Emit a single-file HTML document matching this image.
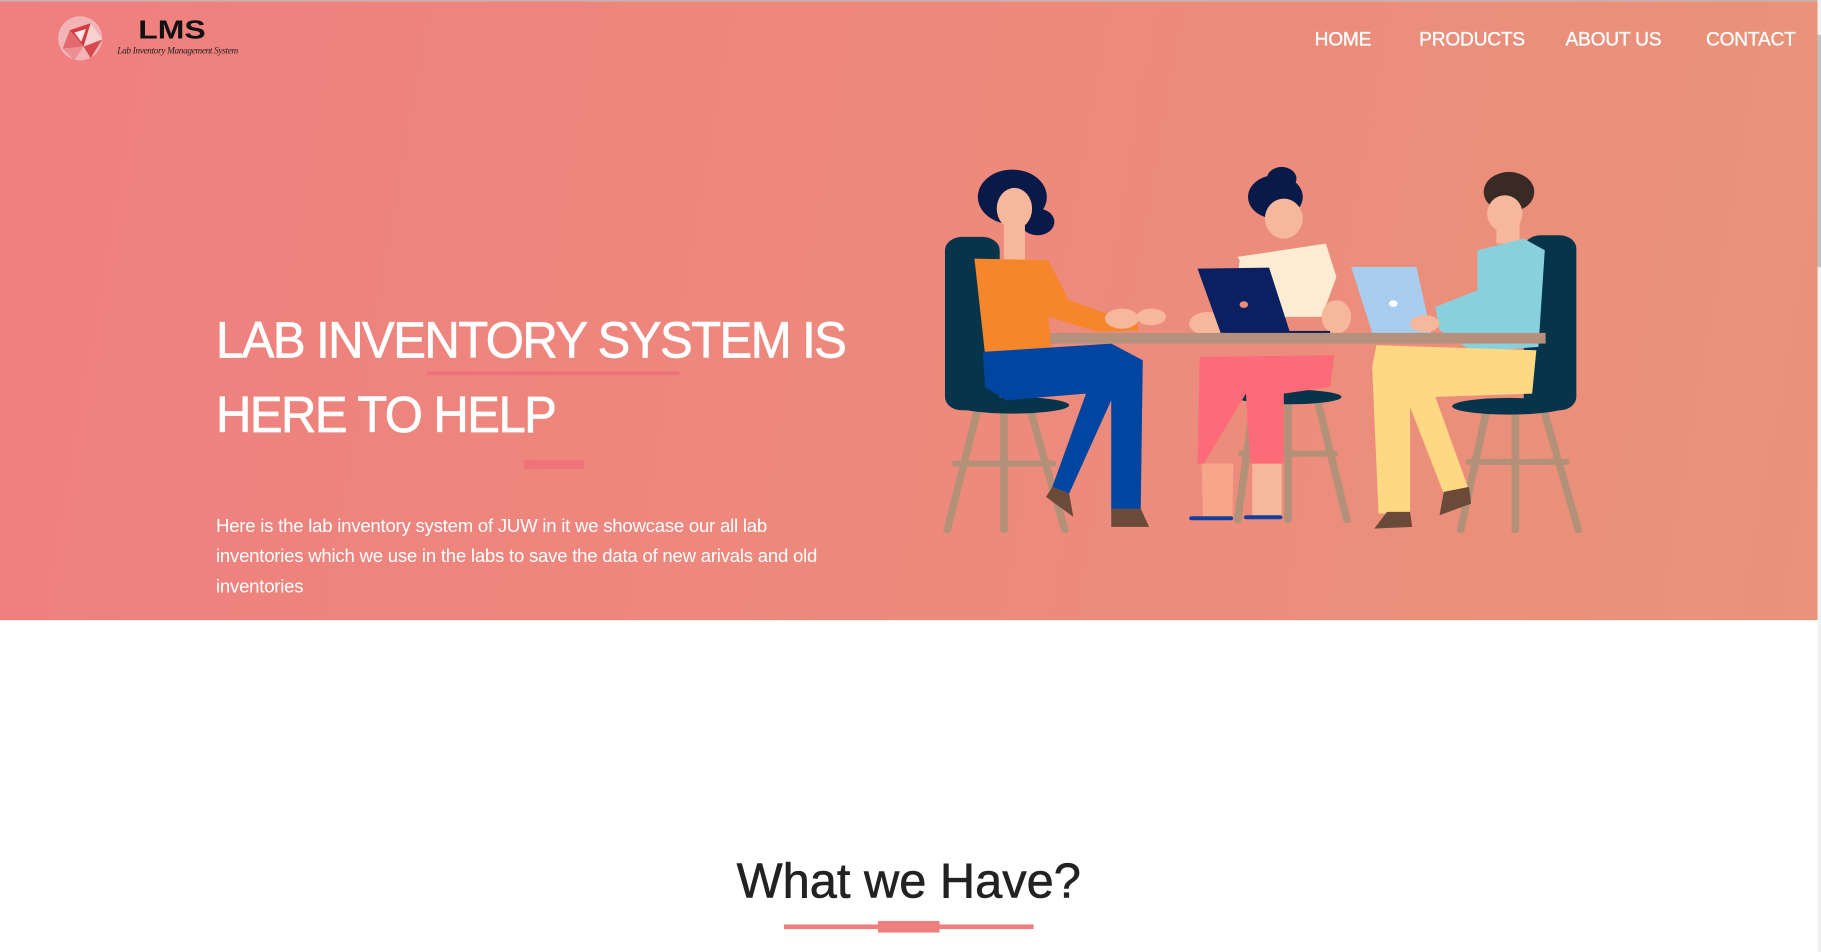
<!DOCTYPE html>
<html><head><meta charset="utf-8"><style>
html,body{margin:0;padding:0;width:1821px;height:952px;overflow:hidden;background:#fff;}
#w{position:absolute;left:0;top:0;width:1568px;height:820px;transform:scale(1.16135);transform-origin:0 0;font-family:"Liberation Sans",sans-serif;}
.hero{position:absolute;left:0;top:0;width:1565px;height:534px;background:linear-gradient(100deg,#ef7f7f 0%,#ed8a7c 55%,#e9937a 100%);border-top:1px solid #b8b8b8;box-sizing:border-box;}
.sb{position:absolute;left:1565px;top:0;width:3px;height:820px;background:#f0f0f0;}
.sb i{position:absolute;left:0;top:30px;width:3px;height:200px;background:#c1c1c1;}
.nav{position:absolute;top:25px;color:#fff;font-size:16.5px;letter-spacing:-0.2px;-webkit-text-stroke:0.3px #fff;}
h1{position:absolute;left:186px;top:262px;margin:0;color:#fff;font-weight:normal;font-size:44px;line-height:64px;letter-spacing:-1.4px;width:700px;-webkit-text-stroke:0.6px #fff;transform:scaleX(0.96);transform-origin:0 0;}
p.t{position:absolute;left:186px;top:441px;margin:0;color:#fff;font-size:16px;line-height:26px;width:620px;letter-spacing:-0.2px;}
h2{position:absolute;left:0;width:1565px;text-align:center;top:735px;margin:0;font-weight:normal;font-size:42px;color:#222;-webkit-text-stroke:0.5px #222;}
</style></head><body><div id="w">
<div class="hero"></div>
<div class="sb"><i></i></div>
<svg style="position:absolute;left:48px;top:12px" width="42" height="42" viewBox="0 0 42 42">
<circle cx="21" cy="21" r="19" fill="#f2b4b4"/>
<polygon points="12,14 30,8 24,28" fill="#d8383f"/>
<polygon points="12,14 24,28 6,30" fill="#e46a70"/>
<polygon points="24,28 40,22 30,38" fill="#d9474e"/>
<polygon points="30,8 40,22 24,28" fill="#f7d0d0"/>
<polygon points="6,30 24,28 16,40" fill="#eb8f93"/>
<polygon points="16,16 26,13 22,24" fill="#fbe8e8"/>
</svg>
<div style="position:absolute;left:119px;top:13px;font-size:22px;font-weight:900;color:#111;letter-spacing:0px;transform:scaleX(1.25);transform-origin:0 0;">LMS</div>
<div style="position:absolute;left:101px;top:39px;font-size:8px;font-style:italic;color:#222;font-family:'Liberation Serif',serif;letter-spacing:-0.3px;">Lab Inventory Management System</div>
<div class="nav" style="left:1132px">HOME</div>
<div class="nav" style="left:1222px">PRODUCTS</div>
<div class="nav" style="left:1348px">ABOUT US</div>
<div class="nav" style="left:1469px">CONTACT</div>
<h1>LAB INVENTORY SYSTEM IS<br>HERE TO HELP</h1>
<div style="position:absolute;left:368px;top:320px;width:217px;height:3px;background:#ee7079;"></div>
<div style="position:absolute;left:451px;top:396px;width:52px;height:8px;background:#ee7478;"></div>
<p class="t">Here is the lab inventory system of JUW in it we showcase our all lab<br>inventories which we use in the labs to save the data of new arivals and old<br>inventories</p>
<svg style="position:absolute;left:800.8px;top:137.8px" width="568.3" height="327.2" viewBox="0 0 1568 1140" preserveAspectRatio="none">
<g stroke="#b39078" stroke-width="18" stroke-linecap="round">
<line x1="110" y1="760" x2="40" y2="1110"/><line x1="175" y1="760" x2="175" y2="1110"/><line x1="240" y1="760" x2="320" y2="1110"/><line x1="60" y1="910" x2="290" y2="910"/>
<line x1="770" y1="720" x2="730" y2="1080"/><line x1="850" y1="720" x2="850" y2="1080"/><line x1="920" y1="720" x2="990" y2="1080"/><line x1="740" y1="880" x2="960" y2="880"/>
<line x1="1320" y1="760" x2="1260" y2="1110"/><line x1="1390" y1="760" x2="1390" y2="1110"/><line x1="1460" y1="760" x2="1540" y2="1110"/><line x1="1280" y1="905" x2="1510" y2="905"/>
</g>
<rect x="35" y="230" width="130" height="520" rx="40" fill="#06344a"/>
<ellipse cx="195" cy="735" rx="135" ry="25" fill="#06344a"/>
<rect x="1410" y="225" width="125" height="525" rx="40" fill="#06344a"/>
<ellipse cx="1375" cy="738" rx="135" ry="25" fill="#06344a"/>
<ellipse cx="852" cy="710" rx="125" ry="22" fill="#06344a"/>
<circle cx="195" cy="110" r="82" fill="#0a1a48"/>
<ellipse cx="255" cy="185" rx="40" ry="40" fill="#0a1a48"/>
<rect x="175" y="180" width="50" height="120" fill="#f7b79a"/>
<ellipse cx="200" cy="145" rx="42" ry="62" fill="#f7b79a"/>
<polygon points="105,295 280,300 330,420 420,460 490,470 495,510 400,515 280,470 290,560 130,580" fill="#f5862c"/>
<ellipse cx="455" cy="475" rx="40" ry="30" fill="#f7b79a"/>
<ellipse cx="525" cy="470" rx="35" ry="25" fill="#f7b79a"/>
<polygon points="125,575 430,550 505,600 500,1050 430,1050 430,720 330,1000 290,980 370,700 180,720 130,680" fill="#0046a0"/>
<polygon points="290,980 330,1000 340,1070 275,1010" fill="#6b4a3a"/>
<polygon points="430,1045 500,1045 520,1100 430,1100" fill="#6b4a3a"/>
<circle cx="820" cy="110" r="65" fill="#0a1a48"/>
<circle cx="835" cy="55" r="35" fill="#0a1a48"/>
<ellipse cx="840" cy="175" rx="45" ry="60" fill="#f7b79a"/>
<polygon points="730,290 940,250 965,350 930,470 720,470 735,300" fill="#fdebd2"/>
<ellipse cx="660" cy="490" rx="45" ry="35" fill="#f7b79a"/>
<ellipse cx="965" cy="470" rx="35" ry="50" fill="#f7b79a"/>
<polygon points="645,910 720,910 718,1070 648,1070" fill="#f7a68a"/>
<polygon points="765,910 835,910 835,1070 765,1070" fill="#f7b79a"/>
<polygon points="640,590 960,585 950,680 840,700 840,910 760,910 750,700 650,910 635,910" fill="#fd6b78"/>
<rect x="615" y="1068" width="105" height="12" rx="6" fill="#1340a0"/><rect x="745" y="1065" width="92" height="12" rx="6" fill="#1340a0"/>
<polygon points="635,325 805,322 855,518 690,518" fill="#0b2060"/>
<rect x="700" y="512" width="250" height="8" fill="#0b2060"/>
<circle cx="745" cy="433" r="10" fill="#f08a7a"/>
<circle cx="1375" cy="95" r="60" fill="#3a2a25"/>
<ellipse cx="1365" cy="160" rx="42" ry="55" fill="#f7b79a"/>
<rect x="1345" y="190" width="55" height="60" fill="#f7b79a"/>
<polygon points="1300,270 1410,235 1460,270 1445,560 1290,575 1210,510 1200,440 1300,390" fill="#88d0dc"/>
<polygon points="1060,555 1440,570 1430,700 1200,710 1280,990 1220,1000 1140,740 1140,1060 1065,1060 1050,620" fill="#fed882"/>
<polygon points="1220,995 1280,980 1285,1030 1210,1065" fill="#6b4a3a"/>
<polygon points="1085,1055 1140,1055 1145,1100 1055,1105" fill="#6b4a3a"/>
<polygon points="1000,320 1155,320 1190,518 1050,518" fill="#a9cdef"/>
<circle cx="1100" cy="430" r="10" fill="#fff"/>
<ellipse cx="1175" cy="490" rx="35" ry="25" fill="#f7b79a"/>
<rect x="285" y="518" width="1177" height="32" fill="#b5907c"/>
</svg>
<h2>What we Have?</h2>
<div style="position:absolute;left:675px;top:796px;width:215px;height:4px;background:#ef8080;"></div>
<div style="position:absolute;left:756px;top:793px;width:53px;height:10px;background:#ef8080;"></div>
</div></body></html>
